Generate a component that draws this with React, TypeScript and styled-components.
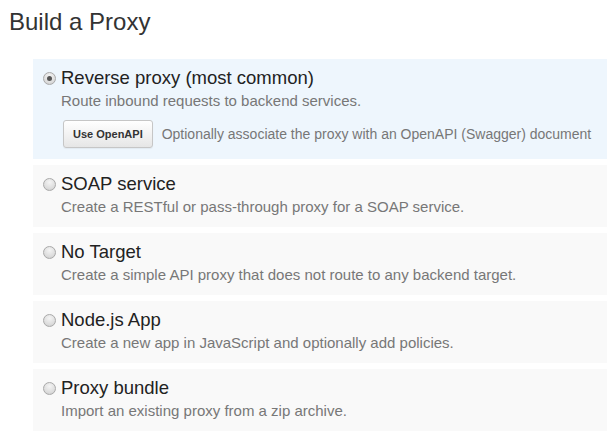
import React from "react";
import styled, { createGlobalStyle } from "styled-components";

const Global = createGlobalStyle`
  html, body { margin: 0; padding: 0; background: #fff; }
  body { font-family: "Liberation Sans", Arial, Helvetica, sans-serif; color: #333; }
`;

const Page = styled.div`
  box-sizing: border-box;
  padding: 8px 0 0 9px;
  width: 607px;
`;

const Heading = styled.h1`
  margin: 0;
  font-size: 24px;
  font-weight: 400;
  line-height: 28px;
  color: #333;
`;

const List = styled.div`
  display: flex;
  flex-direction: column;
  gap: 6px;
  margin: 23px 0 0 24px;
`;

const Card = styled.label<{ $active?: boolean }>`
  display: block;
  padding: 8px 10px 11px 10px;
  background: ${(p) => (p.$active ? "#eef6fd" : "#f9f9f9")};
  cursor: pointer;
`;

const TitleRow = styled.div`
  display: flex;
  align-items: center;
  gap: 5px;
`;

const Radio = styled.span<{ $checked?: boolean }>`
  width: 11px;
  height: 11px;
  border-radius: 50%;
  border: 1px solid #a9a9a9;
  background: radial-gradient(circle at 50% 30%, #f4f4f4 0%, #dcdcdc 65%, #c8c8c8 100%);
  display: flex;
  align-items: center;
  justify-content: center;
  flex-shrink: 0;
  &::after {
    content: "";
    display: ${(p) => (p.$checked ? "block" : "none")};
    width: 5px;
    height: 5px;
    border-radius: 50%;
    background: #555;
  }
`;

const Title = styled.span`
  font-size: 18.5px;
  line-height: 22px;
  color: #222;
`;

const Desc = styled.div`
  margin: 3px 0 0 18px;
  font-size: 15px;
  line-height: 18px;
  color: #777;
`;

const Extra = styled.div`
  display: flex;
  align-items: center;
  gap: 9px;
  margin: 10px 0 0 20px;
`;

const Button = styled.button`
  font-family: "Liberation Sans", Arial, sans-serif;
  font-size: 11px;
  font-weight: 700;
  color: #333;
  height: 28px;
  padding: 0 9px;
  border: 1px solid #c6c6c6;
  border-radius: 3px;
  background: linear-gradient(#ffffff, #e6e6e6);
  box-shadow: 0 1px 1px rgba(0, 0, 0, 0.05);
`;

const Note = styled.span`
  font-size: 14px;
  color: #777;
  white-space: nowrap;
`;

const options = [
  {
    title: "Reverse proxy (most common)",
    desc: "Route inbound requests to backend services.",
    active: true,
  },
  { title: "SOAP service", desc: "Create a RESTful or pass-through proxy for a SOAP service." },
  { title: "No Target", desc: "Create a simple API proxy that does not route to any backend target." },
  { title: "Node.js App", desc: "Create a new app in JavaScript and optionally add policies." },
  { title: "Proxy bundle", desc: "Import an existing proxy from a zip archive." },
];

export default function App() {
  return (
    <Page>
      <Global />
      <Heading>Build a Proxy</Heading>
      <List>
        {options.map((o) => (
          <Card key={o.title} $active={o.active}>
            <TitleRow>
              <Radio $checked={o.active} />
              <Title>{o.title}</Title>
            </TitleRow>
            <Desc>{o.desc}</Desc>
            {o.active && (
              <Extra>
                <Button type="button">Use OpenAPI</Button>
                <Note>Optionally associate the proxy with an OpenAPI (Swagger) document</Note>
              </Extra>
            )}
          </Card>
        ))}
      </List>
    </Page>
  );
}
